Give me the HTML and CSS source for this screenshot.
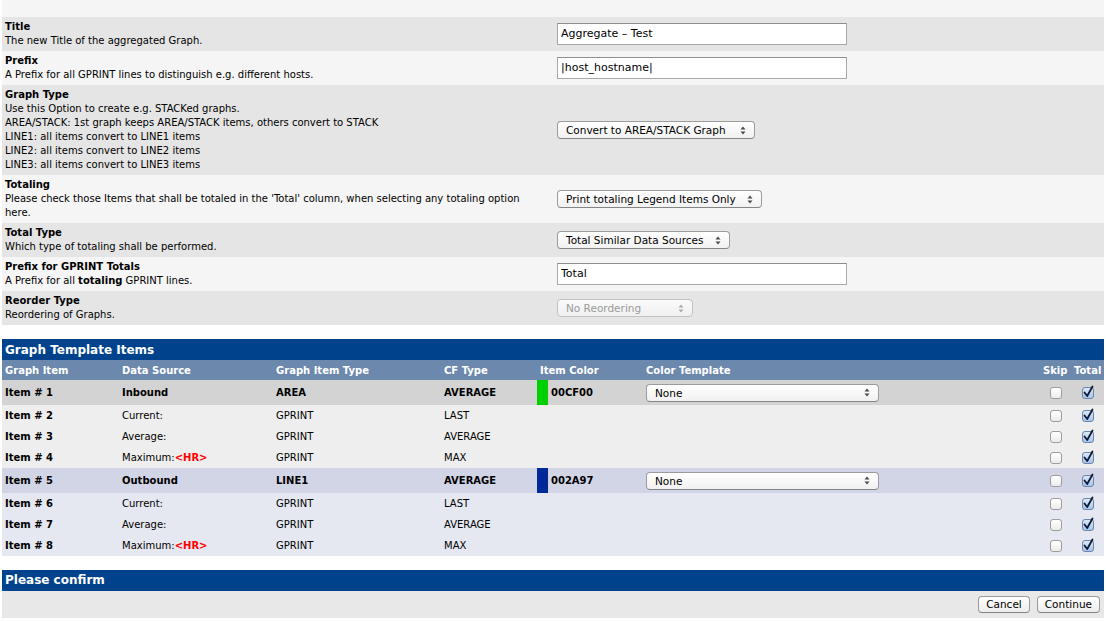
FILE: index.html
```html
<!DOCTYPE html>
<html>
<head>
<meta charset="utf-8">
<title>Aggregate Graph</title>
<link rel="stylesheet" href="styles.css">
</head>
<body>
<div class="form">
  <div class="frow even strip"></div>
  <div class="frow odd">
    <div class="flabel"><b>Title</b><br>The new Title of the aggregated Graph.</div>
    <div class="fval"><input class="text" type="text" value="Aggregate – Test"></div>
  </div>
  <div class="frow even">
    <div class="flabel"><b>Prefix</b><br>A Prefix for all GPRINT lines to distinguish e.g. different hosts.</div>
    <div class="fval"><input class="text" type="text" value="|host_hostname|"></div>
  </div>
  <div class="frow odd">
    <div class="flabel"><b>Graph Type</b><br>Use this Option to create e.g. STACKed graphs.<br>AREA/STACK: 1st graph keeps AREA/STACK items, others convert to STACK<br>LINE1: all items convert to LINE1 items<br>LINE2: all items convert to LINE2 items<br>LINE3: all items convert to LINE3 items</div>
    <div class="fval"><div class="select w-convert"><span>Convert to AREA/STACK Graph</span><svg class="arr" width="6" height="9" viewBox="0 0 6 9"><path d="M0.5 3.5L3 0.5L5.5 3.5Z M0.5 5.5L3 8.5L5.5 5.5Z"/></svg></div></div>
  </div>
  <div class="frow even">
    <div class="flabel"><b>Totaling</b><br>Please check those Items that shall be totaled in the 'Total' column, when selecting any totaling option here.</div>
    <div class="fval"><div class="select w-print"><span>Print totaling Legend Items Only</span><svg class="arr" width="6" height="9" viewBox="0 0 6 9"><path d="M0.5 3.5L3 0.5L5.5 3.5Z M0.5 5.5L3 8.5L5.5 5.5Z"/></svg></div></div>
  </div>
  <div class="frow odd">
    <div class="flabel"><b>Total Type</b><br>Which type of totaling shall be performed.</div>
    <div class="fval"><div class="select w-similar"><span>Total Similar Data Sources</span><svg class="arr" width="6" height="9" viewBox="0 0 6 9"><path d="M0.5 3.5L3 0.5L5.5 3.5Z M0.5 5.5L3 8.5L5.5 5.5Z"/></svg></div></div>
  </div>
  <div class="frow even">
    <div class="flabel"><b>Prefix for GPRINT Totals</b><br>A Prefix for all <b>totaling</b> GPRINT lines.</div>
    <div class="fval"><input class="text" type="text" value="Total"></div>
  </div>
  <div class="frow odd">
    <div class="flabel"><b>Reorder Type</b><br>Reordering of Graphs.</div>
    <div class="fval"><div class="select disabled w-reorder"><span>No Reordering</span><svg class="arr" width="6" height="9" viewBox="0 0 6 9"><path d="M0.5 3.5L3 0.5L5.5 3.5Z M0.5 5.5L3 8.5L5.5 5.5Z"/></svg></div></div>
  </div>
</div>

<table class="items">
  <colgroup>
    <col class="c1"><col class="c2"><col class="c3"><col class="c4"><col class="c5"><col class="c6"><col class="c7"><col class="c8"><col class="c9">
  </colgroup>
  <tr class="title"><td colspan="9">Graph Template Items</td></tr>
  <tr class="sub">
    <td>Graph Item</td><td>Data Source</td><td>Graph Item Type</td><td>CF Type</td><td colspan="2">Item Color</td><td>Color Template</td><td>Skip</td><td>Total</td>
  </tr>
  <tr class="main g1">
    <td><b>Item # 1</b></td><td><b>Inbound</b></td><td><b>AREA</b></td><td><b>AVERAGE</b></td>
    <td class="swatch green"></td><td><b>00CF00</b></td>
    <td><div class="select w-none"><span>None</span><svg class="arr" width="6" height="9" viewBox="0 0 6 9"><path d="M0.5 3.5L3 0.5L5.5 3.5Z M0.5 5.5L3 8.5L5.5 5.5Z"/></svg></div></td>
    <td class="cbc"><span class="cb"></span></td>
    <td class="cbc"><span class="cb on"><svg width="13" height="14" viewBox="0 0 13 14"><path d="M2.5 7.5L5.2 11L10.5 1.5" fill="none" stroke="#0d1a33" stroke-width="1.8" stroke-linecap="round" stroke-linejoin="round"/></svg></span></td>
  </tr>
  <tr class="sec g1s">
    <td><b>Item # 2</b></td><td>Current:</td><td>GPRINT</td><td>LAST</td><td></td><td></td><td></td>
    <td class="cbc"><span class="cb"></span></td>
    <td class="cbc"><span class="cb on"><svg width="13" height="14" viewBox="0 0 13 14"><path d="M2.5 7.5L5.2 11L10.5 1.5" fill="none" stroke="#0d1a33" stroke-width="1.8" stroke-linecap="round" stroke-linejoin="round"/></svg></span></td>
  </tr>
  <tr class="sec g1s">
    <td><b>Item # 3</b></td><td>Average:</td><td>GPRINT</td><td>AVERAGE</td><td></td><td></td><td></td>
    <td class="cbc"><span class="cb"></span></td>
    <td class="cbc"><span class="cb on"><svg width="13" height="14" viewBox="0 0 13 14"><path d="M2.5 7.5L5.2 11L10.5 1.5" fill="none" stroke="#0d1a33" stroke-width="1.8" stroke-linecap="round" stroke-linejoin="round"/></svg></span></td>
  </tr>
  <tr class="sec g1s">
    <td><b>Item # 4</b></td><td>Maximum:<b class="hr">&lt;HR&gt;</b></td><td>GPRINT</td><td>MAX</td><td></td><td></td><td></td>
    <td class="cbc"><span class="cb"></span></td>
    <td class="cbc"><span class="cb on"><svg width="13" height="14" viewBox="0 0 13 14"><path d="M2.5 7.5L5.2 11L10.5 1.5" fill="none" stroke="#0d1a33" stroke-width="1.8" stroke-linecap="round" stroke-linejoin="round"/></svg></span></td>
  </tr>
  <tr class="main g2">
    <td><b>Item # 5</b></td><td><b>Outbound</b></td><td><b>LINE1</b></td><td><b>AVERAGE</b></td>
    <td class="swatch blue"></td><td><b>002A97</b></td>
    <td><div class="select w-none"><span>None</span><svg class="arr" width="6" height="9" viewBox="0 0 6 9"><path d="M0.5 3.5L3 0.5L5.5 3.5Z M0.5 5.5L3 8.5L5.5 5.5Z"/></svg></div></td>
    <td class="cbc"><span class="cb"></span></td>
    <td class="cbc"><span class="cb on"><svg width="13" height="14" viewBox="0 0 13 14"><path d="M2.5 7.5L5.2 11L10.5 1.5" fill="none" stroke="#0d1a33" stroke-width="1.8" stroke-linecap="round" stroke-linejoin="round"/></svg></span></td>
  </tr>
  <tr class="sec g2s">
    <td><b>Item # 6</b></td><td>Current:</td><td>GPRINT</td><td>LAST</td><td></td><td></td><td></td>
    <td class="cbc"><span class="cb"></span></td>
    <td class="cbc"><span class="cb on"><svg width="13" height="14" viewBox="0 0 13 14"><path d="M2.5 7.5L5.2 11L10.5 1.5" fill="none" stroke="#0d1a33" stroke-width="1.8" stroke-linecap="round" stroke-linejoin="round"/></svg></span></td>
  </tr>
  <tr class="sec g2s">
    <td><b>Item # 7</b></td><td>Average:</td><td>GPRINT</td><td>AVERAGE</td><td></td><td></td><td></td>
    <td class="cbc"><span class="cb"></span></td>
    <td class="cbc"><span class="cb on"><svg width="13" height="14" viewBox="0 0 13 14"><path d="M2.5 7.5L5.2 11L10.5 1.5" fill="none" stroke="#0d1a33" stroke-width="1.8" stroke-linecap="round" stroke-linejoin="round"/></svg></span></td>
  </tr>
  <tr class="sec g2s">
    <td><b>Item # 8</b></td><td>Maximum:<b class="hr">&lt;HR&gt;</b></td><td>GPRINT</td><td>MAX</td><td></td><td></td><td></td>
    <td class="cbc"><span class="cb"></span></td>
    <td class="cbc"><span class="cb on"><svg width="13" height="14" viewBox="0 0 13 14"><path d="M2.5 7.5L5.2 11L10.5 1.5" fill="none" stroke="#0d1a33" stroke-width="1.8" stroke-linecap="round" stroke-linejoin="round"/></svg></span></td>
  </tr>
</table>

<div class="confirm">
  <div class="confirm-title">Please confirm</div>
  <div class="confirm-row">
    <button class="btn" type="button">Cancel</button>
    <button class="btn" type="button">Continue</button>
  </div>
</div>
</body>
</html>
```
FILE: styles.css
```css
html, body {
  margin: 0;
  padding: 0;
  background: #fff;
}
body {
  font-family: "DejaVu Sans", Verdana, sans-serif;
  font-size: 10px;
  color: #000;
}
.form {
  margin: 0 2px;
  width: 1102px;
}
.frow {
  display: grid;
  grid-template-columns: 551px 1fr;
  align-items: center;
}
.strip { height: 17px; }
.odd { background: #e5e5e5; }
.even { background: #f5f5f5; }
.flabel {
  padding: 3px 16px 3px 3px;
  line-height: 14px;
}
.fval {
  padding-left: 4px;
  display: flex;
  align-items: center;
}
input.text {
  box-sizing: border-box;
  width: 290px;
  height: 22px;
  margin: 0;
  padding: 1px 3px 2px 3px;
  border: 1px solid #a8a8a8;
  border-top-color: #8e8e8e;
  background: #fff;
  font-family: "DejaVu Sans", sans-serif;
  font-size: 11px;
  line-height: normal;
  color: #000;
  outline: none;
}
.select {
  box-sizing: border-box;
  height: 18px;
  display: flex;
  align-items: center;
  justify-content: space-between;
  padding: 0 8px 0 8px;
  border: 1px solid #9c9c9c;
  border-bottom-color: #858585;
  border-radius: 4px;
  background: linear-gradient(#ffffff, #f1f1f1);
  font-size: 10.5px;
  color: #000;
  white-space: nowrap;
}
.select .arr { fill: #4a4a4a; flex: none; }
.select.disabled {
  color: #9a9a9a;
  border-color: #c2c2c2;
  background: linear-gradient(#fafafa, #f0f0f0);
}
.select.disabled .arr { fill: #aaa; }
.w-convert { width: 198px; }
.w-print { width: 205px; }
.w-similar { width: 173px; }
.w-reorder { width: 136px; }
.w-none { width: 233px; }

.items {
  margin: 14px 2px 0 2px;
  width: 1102px;
  table-layout: fixed;
  border-collapse: collapse;
  border-spacing: 0;
}
.items td {
  padding: 0 3px;
  white-space: nowrap;
  overflow: visible;
}
.c1 { width: 117px; }
.c2 { width: 154px; }
.c3 { width: 168px; }
.c4 { width: 96px; }
.c5 { width: 11px; }
.c6 { width: 95px; }
.c7 { width: 397px; }
.c8 { width: 31px; }
.c9 { width: 33px; }

.items tr.title td {
  background: #00438c;
  color: #fff;
  font-weight: bold;
  font-size: 12px;
  height: 21px;
}
.items tr.sub td {
  background: #6d88ad;
  color: #fff;
  font-weight: bold;
  height: 20px;
}
.items tr.main td { height: 25px; }
.items tr.sec td { height: 21px; }
.g1 { background: #d3d3d3; }
.g1s { background: #eeeeee; }
.g2 { background: #d2d5e6; }
.g2s { background: #e5e7f1; }
.items td.swatch { padding: 0; }
.swatch.green { background: #00cf00; }
.swatch.blue { background: #002a97; }
.items td.cbc { text-align: center; padding: 0; }
.hr { color: #ff0000; }

.cb {
  display: inline-block;
  box-sizing: border-box;
  width: 12px;
  height: 12px;
  border: 1px solid #9d9d9d;
  border-radius: 3px;
  background: linear-gradient(#ffffff, #ececec);
  vertical-align: middle;
  position: relative;
}
.cb.on {
  border-color: #6a86ad;
  background: linear-gradient(#dbe8f8, #a7c4ea);
}
.cb svg {
  position: absolute;
  left: -1px;
  top: -3px;
}

.confirm {
  margin: 14px 2px 0 2px;
  width: 1102px;
}
.confirm-title {
  background: #00438c;
  color: #fff;
  font-weight: bold;
  font-size: 12px;
  height: 21px;
  line-height: 21px;
  padding-left: 3px;
}
.confirm-row {
  background: #e8e8e8;
  height: 27px;
  display: flex;
  align-items: center;
  justify-content: flex-end;
  gap: 7px;
  padding-right: 4px;
}
.btn {
  box-sizing: border-box;
  height: 17px;
  margin: 0;
  padding: 0 7px;
  border: 1px solid #9a9a9a;
  border-bottom-color: #838383;
  border-radius: 4px;
  background: linear-gradient(#ffffff, #ededed);
  font-family: "DejaVu Sans", sans-serif;
  font-size: 10.5px;
  color: #000;
  line-height: 15px;
}
```
